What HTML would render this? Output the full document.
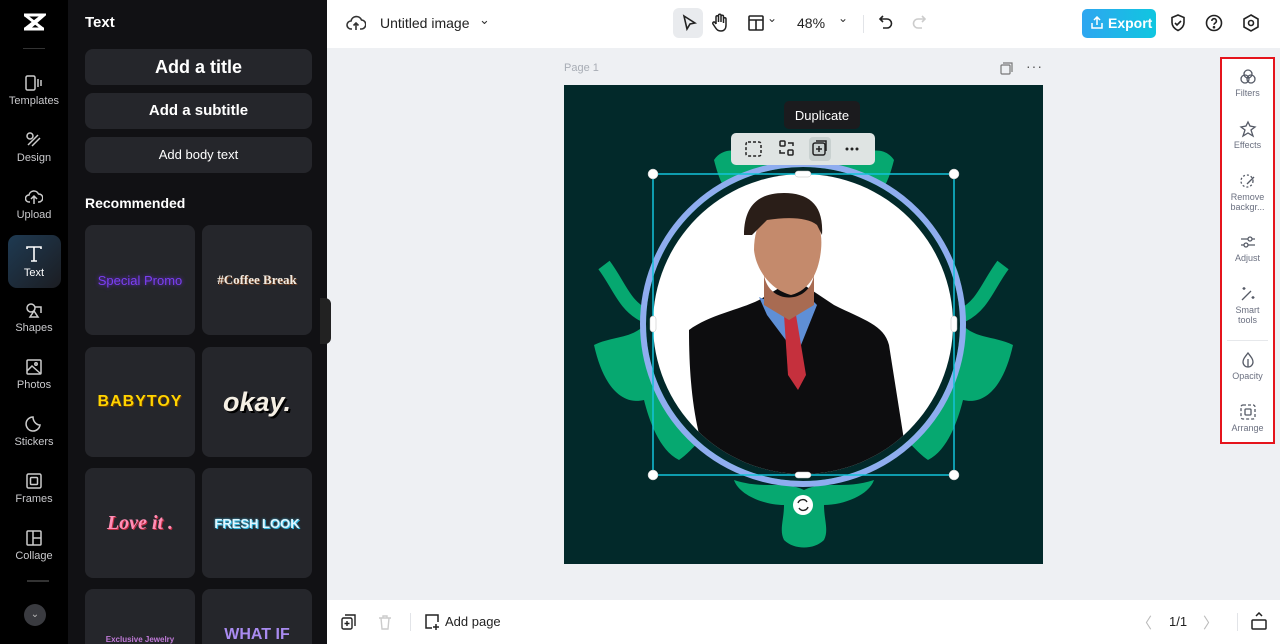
<!DOCTYPE html>
<html><head><meta charset="utf-8"><style>
*{box-sizing:border-box;margin:0;padding:0}
body{width:1280px;height:644px;overflow:hidden;font-family:"Liberation Sans",sans-serif;background:#eef0f3;position:relative}
.abs{position:absolute}
.rail{left:0;top:0;width:68px;height:644px;background:#000}
.ri{position:absolute;left:0;width:68px;text-align:center;color:#c9c9cc;font-size:11px}
.ri svg{display:block;margin:0 auto 4px}
.panel{left:68px;top:0;width:259px;height:644px;background:#111114}
.btn{position:absolute;left:17px;width:227px;height:36px;background:#25262b;border-radius:8px;color:#fff;text-align:center;font-weight:bold}
.card{position:absolute;width:110px;height:110px;background:#25262b;border-radius:8px;display:flex;align-items:center;justify-content:center;font-weight:bold}
.top{left:327px;top:0;width:953px;height:48px;background:#fff}
.bot{left:327px;top:600px;width:953px;height:44px;background:#fff}
.rt{left:1220px;top:57px;width:55px;height:387px;border:2px solid #e5141c;background:#fff}
.rt .it{position:absolute;left:0;width:51px;text-align:center;font-size:9px;color:#6b7080;line-height:10px}
.rt svg{display:block;margin:0 auto 2px}
</style></head><body>
<div class="abs rail">
  <svg class="abs" style="left:22px;top:12px" width="24" height="20" viewBox="0 0 24 20"><path d="M2 3h20L6 17h16M2 17h4M18 3L6 3" stroke="#fff" stroke-width="3" fill="none"/><path d="M3 3l18 14M21 3L3 17" stroke="#fff" stroke-width="3"/></svg>
  <div class="abs" style="left:23px;top:48px;width:22px;height:1px;background:#333"></div>
  <div class="ri" style="top:75px"><svg width="18" height="16" viewBox="0 0 18 16" fill="none" stroke="#ccc" stroke-width="1.5"><rect x="1" y="1" width="9" height="14" rx="1.5"/><path d="M13 4v8M16 5v6"/></svg>Templates</div>
  <div class="ri" style="top:132px"><svg width="18" height="16" viewBox="0 0 18 16" fill="none" stroke="#ccc" stroke-width="1.5"><circle cx="5" cy="4" r="3"/><path d="M3 13l10-10M7 14l8-8"/></svg>Design</div>
  <div class="ri" style="top:189px"><svg width="18" height="16" viewBox="0 0 18 16" fill="none" stroke="#ccc" stroke-width="1.5"><path d="M5 13H4a3.5 3.5 0 010-7 5 5 0 019.5-1A3.5 3.5 0 0114 13h-1M9 15V8M6 10l3-3 3 3"/></svg>Upload</div>
  <div class="abs" style="left:8px;top:235px;width:53px;height:53px;border-radius:9px;background:linear-gradient(135deg,#1e3a52,#1c1d22)"></div>
  <div class="ri" style="top:245px;color:#fff"><svg width="18" height="18" viewBox="0 0 18 18" fill="none" stroke="#fff" stroke-width="1.6"><path d="M2 4V2h14v2M9 2v14M6 16h6"/></svg>Text</div>
  <div class="ri" style="top:302px"><svg width="18" height="16" viewBox="0 0 18 16" fill="none" stroke="#ccc" stroke-width="1.5"><circle cx="6" cy="6" r="4"/><path d="M10 5h6v6M5 15l4-6 4 6z"/></svg>Shapes</div>
  <div class="ri" style="top:359px"><svg width="18" height="16" viewBox="0 0 18 16" fill="none" stroke="#ccc" stroke-width="1.5"><rect x="2" y="1" width="14" height="14" rx="1"/><path d="M2 12l5-5 9 8"/><circle cx="11" cy="5" r="1.2"/></svg>Photos</div>
  <div class="ri" style="top:416px"><svg width="18" height="16" viewBox="0 0 18 16" fill="none" stroke="#ccc" stroke-width="1.5"><path d="M15 9A7 7 0 118 1c0 4 3 8 7 8z"/></svg>Stickers</div>
  <div class="ri" style="top:473px"><svg width="18" height="16" viewBox="0 0 18 16" fill="none" stroke="#ccc" stroke-width="1.5"><rect x="2" y="1" width="14" height="14" rx="1.5"/><rect x="5.5" y="4.5" width="7" height="7" rx="1"/></svg>Frames</div>
  <div class="ri" style="top:530px"><svg width="18" height="16" viewBox="0 0 18 16" fill="none" stroke="#ccc" stroke-width="1.5"><rect x="2" y="1" width="14" height="14" rx="1"/><path d="M8 1v14M8 8h8"/></svg>Collage</div>
  <div class="abs" style="left:27px;top:580px;width:22px;height:2px;background:#333"></div>
  <div class="abs" style="left:24px;top:604px;width:22px;height:22px;border-radius:50%;background:#3a3b40;color:#bbb;font-size:10px;text-align:center;line-height:22px">⌄</div>
</div>
<div class="abs panel">
  <div class="abs" style="left:17px;top:14px;color:#fff;font-weight:bold;font-size:15px">Text</div>
  <div class="btn" style="top:49px;font-size:18px;line-height:36px">Add a title</div>
  <div class="btn" style="top:93px;font-size:15px;line-height:36px">Add a subtitle</div>
  <div class="btn" style="top:137px;font-size:13px;font-weight:normal;line-height:36px">Add body text</div>
  <div class="abs" style="left:17px;top:195px;color:#fff;font-weight:bold;font-size:14px">Recommended</div>
  <div class="card" style="left:17px;top:225px;color:#7b3ff2;font-size:13px;font-weight:normal;text-shadow:0 0 4px #6a2bd9">Special Promo</div>
  <div class="card" style="left:134px;top:225px;color:#f3ebe0;font-family:'Liberation Serif',serif;font-size:13px;text-shadow:1px 1px 0 #6b3b1f">#Coffee Break</div>
  <div class="card" style="left:17px;top:347px;color:#ffd400;font-size:16px;letter-spacing:1px;text-shadow:1px 1px 0 #6b3b00">BABYTOY</div>
  <div class="card" style="left:134px;top:347px;color:#f5efe4;font-size:27px;font-style:italic;font-weight:900;text-shadow:2px 2px 0 #000">okay.</div>
  <div class="card" style="left:17px;top:468px;color:#ff8fb6;font-family:'Liberation Serif',serif;font-size:20px;font-style:italic;text-shadow:1px 1px 0 #c0293f">Love it .</div>
  <div class="card" style="left:134px;top:468px;color:#dff6ff;font-size:13px;text-shadow:0 0 2px #36b8e0,1px 1px 0 #36b8e0">FRESH LOOK</div>
  <div class="card" style="left:17px;top:589px;align-items:flex-end;color:#c07ad8;font-size:8px;height:55px;border-radius:8px 8px 0 0">Exclusive Jewelry</div>
  <div class="card" style="left:134px;top:589px;align-items:flex-end;color:#a98bf0;font-size:16px;height:55px;border-radius:8px 8px 0 0">WHAT IF</div>
  <div class="abs" style="left:252px;top:298px;width:11px;height:46px;background:#222;border-radius:0 6px 6px 0"></div>
</div>
<div class="abs top">
  <svg class="abs" style="left:19px;top:14px" width="20" height="18" viewBox="0 0 20 18" fill="none" stroke="#333" stroke-width="1.6"><path d="M6 15H5a4 4 0 010-8 5.5 5.5 0 0110.5-1A4 4 0 0115 15h-1M10 16V9M7.5 11.5L10 9l2.5 2.5"/></svg>
  <div class="abs" style="left:53px;top:15px;font-size:14px;color:#222">Untitled image</div>
  <div class="abs" style="left:152px;top:12px;font-size:13px;color:#333">⌄</div>
  <div class="abs" style="left:346px;top:8px;width:30px;height:30px;border-radius:6px;background:#e9ebee"></div>
  <svg class="abs" style="left:354px;top:14px" width="16" height="18" viewBox="0 0 16 18" fill="none" stroke="#222" stroke-width="1.6"><path d="M3 2l11 7-5 1-3 5z"/></svg>
  <svg class="abs" style="left:384px;top:13px" width="18" height="20" viewBox="0 0 18 20" fill="none" stroke="#222" stroke-width="1.5"><path d="M5 11V4a1.2 1.2 0 012.5 0v5M7.5 9V2.5a1.2 1.2 0 012.5 0V9M10 9V3.5a1.2 1.2 0 012.5 0V10M12.5 10V6a1.2 1.2 0 012.5 0v6c0 4-2 6-5 6s-4-1-6-4l-2-3a1.2 1.2 0 012-1.5L5 11"/></svg>
  <svg class="abs" style="left:421px;top:15px" width="16" height="16" viewBox="0 0 16 16" fill="none" stroke="#222" stroke-width="1.6"><rect x="1" y="1" width="14" height="14" rx="1"/><path d="M1 5h14M8 5v10"/></svg>
  <div class="abs" style="left:440px;top:11px;font-size:12px;color:#333">⌄</div>
  <div class="abs" style="left:470px;top:15px;font-size:14px;color:#222">48%</div>
  <div class="abs" style="left:511px;top:11px;font-size:12px;color:#333">⌄</div>
  <div class="abs" style="left:536px;top:15px;width:1px;height:18px;background:#e2e4e8"></div>
  <svg class="abs" style="left:551px;top:14px" width="16" height="18" viewBox="0 0 16 18" fill="none" stroke="#222" stroke-width="1.6"><path d="M5 2L2 5l3 3M2 5h7a4.5 4.5 0 010 9H5"/></svg>
  <svg class="abs" style="left:584px;top:14px" width="16" height="18" viewBox="0 0 16 18" fill="none" stroke="#ccc" stroke-width="1.6"><path d="M11 2l3 3-3 3M14 5H7a4.5 4.5 0 000 9h4"/></svg>
  <div class="abs" style="left:755px;top:9px;width:74px;height:29px;border-radius:5px;background:linear-gradient(90deg,#2ea6f0,#10c6e0);color:#fff;font-weight:bold;font-size:14px;line-height:29px;padding-left:26px;white-space:nowrap;overflow:hidden">Export</div>
  <svg class="abs" style="left:763px;top:16px" width="14" height="14" viewBox="0 0 14 14" fill="none" stroke="#fff" stroke-width="1.5"><path d="M7 9V1M4 4l3-3 3 3M2 7v5h10V7"/></svg>
  <svg class="abs" style="left:843px;top:14px" width="16" height="18" viewBox="0 0 16 18" fill="none" stroke="#222" stroke-width="1.6"><path d="M8 1l6 2.5v5c0 4-3 6.5-6 8-3-1.5-6-4-6-8v-5z"/><path d="M5 9l2 2 4-4"/></svg>
  <svg class="abs" style="left:878px;top:14px" width="18" height="18" viewBox="0 0 18 18" fill="none" stroke="#222" stroke-width="1.6"><circle cx="9" cy="9" r="7.5"/><path d="M6.8 7a2.3 2.3 0 114 1.5c-1 .7-1.8 1.2-1.8 2.3"/><circle cx="9" cy="13.2" r=".5" fill="#222"/></svg>
  <svg class="abs" style="left:915px;top:14px" width="18" height="18" viewBox="0 0 18 18" fill="none" stroke="#222" stroke-width="1.6"><path d="M9 1l7 4v8l-7 4-7-4V5z"/><circle cx="9" cy="9" r="2.5"/></svg>
</div>
<div class="abs" style="left:564px;top:62px;font-size:11px;color:#a8adb5">Page 1</div>
<svg class="abs" style="left:1000px;top:62px" width="13" height="13" viewBox="0 0 13 13" fill="none" stroke="#777" stroke-width="1.2"><rect x="1" y="3" width="9" height="9" rx="1"/><path d="M3 1h9v9"/></svg>
<div class="abs" style="left:1026px;top:58px;font-size:14px;color:#555;letter-spacing:1px">···</div>
<svg class="abs" style="left:564px;top:85px" width="479" height="479" viewBox="0 0 479 479">
  <rect width="479" height="479" fill="#02292a"/>
  <g fill="#06a870">
    <path d="M30 260c20-10 40-5 55-25-10-30 0-70 30-80 15-5 40-10 55-20l0 200c-30 10-40 30-55 40-20-10-30-40-35-60-20 5-40-10-50-55z"/>
    <path d="M449 260c-20-10-40-5-55-25 10-30 0-70-30-80-15-5-40-10-55-20l0 200c30 10 40 30 55 40 20-10 30-40 35-60 20 5 40-10 50-55z"/>
    <path d="M40 180c15 20 20 40 40 50M439 180c-15 20-20 40-40 50" stroke="#06a870" stroke-width="14" fill="none"/>
    <path d="M170 395c30 10 50 0 70 10 20-10 40 0 70-10-5 15-30 25-50 25 0 15 5 25 0 35-10 10-30 10-40 0-5-10 0-20 0-35-20 0-45-10-50-25z"/>
    <path d="M150 75c10-15 30-10 40 0 20-5 35-15 50-15s30 10 50 15c10-10 30-15 40 0-5 20-10 30-20 40H170c-10-10-15-20-20-40z"/>
    <circle cx="239" cy="239" r="162"/>
  </g>
  <circle cx="239" cy="239" r="157" fill="#02292a"/>
  <circle cx="239" cy="239" r="160" fill="none" stroke="#8fadef" stroke-width="6"/>
  <circle cx="239" cy="239" r="150" fill="#fff"/>
  <clipPath id="c"><circle cx="239" cy="239" r="150"/></clipPath>
  <g clip-path="url(#c)">
    <path d="M125 245c20-15 50-20 70-30l25-15 20 0 30 20c30 15 50 20 55 40l15 95c5 25 10 50 0 60l-180 0c-20-40-35-80-35-170z" fill="#0d0d0f"/>
    <path d="M195 212l28 12 20-14 10 10-20 50-30-40z" fill="#5f8fd6"/>
    <path d="M220 230l12 0 10 60-8 15-10-15z" fill="#c5303d"/>
    <path d="M190 165c0-30 15-45 35-45 20 0 35 15 32 45-2 20-10 40-30 45-20-5-35-25-37-45z" fill="#c48a6c"/>
    <path d="M180 150c0-30 15-42 40-42 25 0 40 12 38 42l-5-10c-10-8-30-8-50-5l-15 15z" fill="#2a1e18"/>
    <path d="M200 190c5 30 45 30 50 0v30l-25 15-25-15z" fill="#a86b52"/>
  </g>
  <rect x="89" y="89" width="301" height="301" fill="none" stroke="#12c3d9" stroke-width="1.5"/>
  <g fill="#fff" stroke="#bbb" stroke-width=".5"><circle cx="89" cy="89" r="5"/><circle cx="390" cy="89" r="5"/><circle cx="89" cy="390" r="5"/><circle cx="390" cy="390" r="5"/>
  <rect x="231" y="86" width="16" height="6" rx="3"/><rect x="231" y="387" width="16" height="6" rx="3"/><rect x="86" y="231" width="6" height="16" rx="3"/><rect x="387" y="231" width="6" height="16" rx="3"/></g>
  <circle cx="239" cy="420" r="10" fill="#fff"/>
  <path d="M234 418a5 5 0 019-1M244 422a5 5 0 01-9 1" stroke="#222" stroke-width="1.4" fill="none"/>
  <rect x="167" y="48" width="144" height="32" rx="5" fill="#dfe4e3"/>
  <rect x="245" y="52" width="22" height="24" rx="4" fill="#c9d1d0"/>
  <rect x="182" y="57" width="15" height="14" rx="2" fill="none" stroke="#222" stroke-width="1.5" stroke-dasharray="3 2"/>
  <g fill="none" stroke="#222" stroke-width="1.5"><rect x="216" y="56" width="5" height="5" rx="1"/><rect x="224" y="65" width="5" height="5" rx="1"/><path d="M224 58h5v3M221 68h-5v-3"/>
  <rect x="249" y="58" width="12" height="12" rx="2"/><path d="M252 56h10v10M255 61v6M252 64h6"/></g>
  <g fill="#222"><circle cx="283" cy="64" r="1.5"/><circle cx="288" cy="64" r="1.5"/><circle cx="293" cy="64" r="1.5"/></g>
  <rect x="220" y="16" width="76" height="28" rx="5" fill="#1b1b1e"/>
  <text x="258" y="35" font-family="Liberation Sans" font-size="13" fill="#fff" text-anchor="middle">Duplicate</text>
</svg>
<div class="abs rt">
  <div class="it" style="top:9px"><svg width="18" height="18" viewBox="0 0 18 18" fill="none" stroke="#555a66" stroke-width="1.3"><circle cx="9" cy="6" r="4"/><circle cx="6" cy="11" r="4"/><circle cx="12" cy="11" r="4"/></svg>Filters</div>
  <div class="it" style="top:61px"><svg width="18" height="18" viewBox="0 0 18 18" fill="none" stroke="#555a66" stroke-width="1.3"><path d="M9 2l2 4 5 1-4 3 2 6-5-3-5 3 2-6-4-3 5-1z"/></svg>Effects</div>
  <div class="it" style="top:113px"><svg width="18" height="18" viewBox="0 0 18 18" fill="none" stroke="#555a66" stroke-width="1.3"><circle cx="8" cy="9" r="6" stroke-dasharray="2 2"/><path d="M8 12l7-7"/></svg>Remove<br>backgr...</div>
  <div class="it" style="top:174px"><svg width="18" height="18" viewBox="0 0 18 18" fill="none" stroke="#555a66" stroke-width="1.3"><path d="M2 6h14M2 12h14"/><circle cx="11" cy="6" r="2" fill="#fff"/><circle cx="7" cy="12" r="2" fill="#fff"/></svg>Adjust</div>
  <div class="it" style="top:226px"><svg width="18" height="18" viewBox="0 0 18 18" fill="none" stroke="#555a66" stroke-width="1.3"><path d="M3 15l9-9M5 2v3M3.5 3.5h3M14 11v3M12.5 12.5h3"/></svg>Smart<br>tools</div>
  <div style="position:absolute;left:5px;top:281px;width:41px;height:1px;background:#e6e8eb"></div>
  <div class="it" style="top:292px"><svg width="18" height="18" viewBox="0 0 18 18" fill="none" stroke="#555a66" stroke-width="1.3"><path d="M9 2c3 4 5 6 5 9a5 5 0 01-10 0c0-3 2-5 5-9z"/><path d="M9 8v8" /></svg>Opacity</div>
  <div class="it" style="top:344px"><svg width="18" height="18" viewBox="0 0 18 18" fill="none" stroke="#555a66" stroke-width="1.3"><rect x="2" y="2" width="14" height="14" rx="2" stroke-dasharray="3 2"/><rect x="6" y="6" width="6" height="6" rx="1"/></svg>Arrange</div>
</div>
<div class="abs bot">
  <svg class="abs" style="left:14px;top:14px" width="16" height="16" viewBox="0 0 16 16" fill="none" stroke="#222" stroke-width="1.4"><rect x="1" y="4" width="10" height="11" rx="1.5"/><path d="M4 1h10v11M6 7v5M3.5 9.5h5"/></svg>
  <svg class="abs" style="left:51px;top:14px" width="14" height="16" viewBox="0 0 14 16" fill="none" stroke="#ccc" stroke-width="1.4"><path d="M1 4h12M5 4V2h4v2M3 4l1 11h6l1-11"/></svg>
  <div class="abs" style="left:83px;top:13px;width:1px;height:18px;background:#e2e4e8"></div>
  <svg class="abs" style="left:97px;top:13px" width="16" height="18" viewBox="0 0 16 18" fill="none" stroke="#222" stroke-width="1.5"><path d="M8 15H2V2h12v7M12 11v6M9 14h6"/></svg>
  <div class="abs" style="left:118px;top:14px;font-size:13px;color:#222">Add page</div>
  <div class="abs" style="left:810px;top:12px;font-size:15px;color:#bbb">〈</div>
  <div class="abs" style="left:842px;top:14px;font-size:13px;color:#222">1/1</div>
  <div class="abs" style="left:876px;top:12px;font-size:15px;color:#bbb">〉</div>
  <div class="abs" style="left:910px;top:13px;width:1px;height:18px;background:#e2e4e8"></div>
  <svg class="abs" style="left:924px;top:12px" width="16" height="18" viewBox="0 0 16 18" fill="none" stroke="#222" stroke-width="1.5"><rect x="1" y="8" width="14" height="9" rx="1"/><path d="M5 4l3-3 3 3"/></svg>
</div>
</body></html>
